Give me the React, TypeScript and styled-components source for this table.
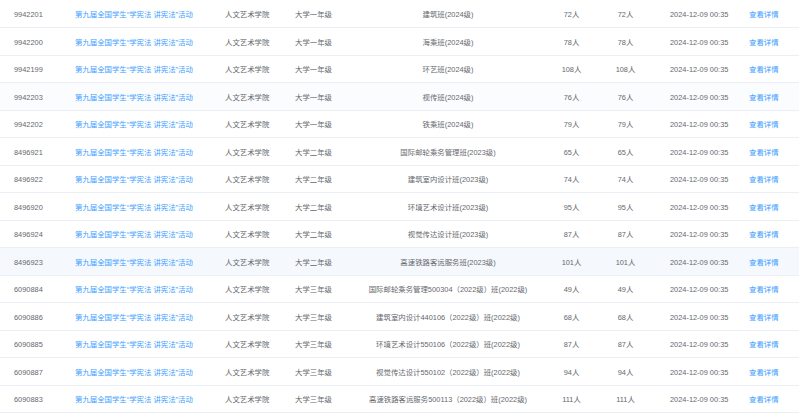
import React from "react";
import styled, { createGlobalStyle } from "styled-components";

const Global = createGlobalStyle`
  html, body { margin: 0; padding: 0; background: #ffffff; }
  body { font-family: "Liberation Sans", "Noto Sans CJK SC", sans-serif; }
`;

const Table = styled.div`
  width: 799px;
  display: flex;
  flex-direction: column;
  padding-top: 0.5px;
`;

const Row = styled.div<{ $bg?: string }>`
  display: grid;
  grid-template-columns: 61px 150px 70px 83px 168px 79px 29px 104px 55px;
  height: 27.5px;
  box-sizing: border-box;
  border-bottom: 1px solid #ebeef5;
  background: ${(p) => p.$bg || "#ffffff"};
  align-items: center;
  font-size: 7.4px;
  color: #66686d;
`;

const Cell = styled.div<{ $align?: "left" | "center"; $pl?: number }>`
  text-align: ${(p) => p.$align || "left"};
  padding-left: ${(p) => (p.$pl ?? 0)}px;
  white-space: nowrap;
  overflow: visible;
  line-height: 12px;
  padding-top: 3px;
`;

const LinkText = styled.span`
  color: #409eff;
`;

type R = { id: string; grade: string; cls: string; n: string; bg?: string };

const rows: R[] = [
  { id: "9942201", grade: "大学一年级", cls: "建筑班(2024级)", n: "72人" },
  { id: "9942200", grade: "大学一年级", cls: "海乘班(2024级)", n: "78人" },
  { id: "9942199", grade: "大学一年级", cls: "环艺班(2024级)", n: "108人" },
  { id: "9942203", grade: "大学一年级", cls: "视传班(2024级)", n: "76人", bg: "#fbfcfe" },
  { id: "9942202", grade: "大学一年级", cls: "铁乘班(2024级)", n: "79人" },
  { id: "8496921", grade: "大学二年级", cls: "国际邮轮乘务管理班(2023级)", n: "65人" },
  { id: "8496922", grade: "大学二年级", cls: "建筑室内设计班(2023级)", n: "74人" },
  { id: "8496920", grade: "大学二年级", cls: "环境艺术设计班(2023级)", n: "95人" },
  { id: "8496924", grade: "大学二年级", cls: "视觉传达设计班(2023级)", n: "87人" },
  { id: "8496923", grade: "大学二年级", cls: "高速铁路客运服务班(2023级)", n: "101人", bg: "#f5f9fe" },
  { id: "6090884", grade: "大学三年级", cls: "国际邮轮乘务管理500304（2022级）班(2022级)", n: "49人" },
  { id: "6090886", grade: "大学三年级", cls: "建筑室内设计440106（2022级）班(2022级)", n: "68人" },
  { id: "6090885", grade: "大学三年级", cls: "环境艺术设计550106（2022级）班(2022级)", n: "87人" },
  { id: "6090887", grade: "大学三年级", cls: "视觉传达设计550102（2022级）班(2022级)", n: "94人" },
  { id: "6090883", grade: "大学三年级", cls: "高速铁路客运服务500113（2022级）班(2022级)", n: "111人" },
];

export default function App() {
  return (
    <>
      <Global />
      <Table>
        {rows.map((r) => (
          <Row key={r.id} $bg={r.bg}>
            <Cell $pl={14}>{r.id}</Cell>
            <Cell $pl={14}>
              <LinkText>第九届全国学生“学宪法 讲宪法”活动</LinkText>
            </Cell>
            <Cell $pl={14}>人文艺术学院</Cell>
            <Cell $pl={14}>{r.grade}</Cell>
            <Cell $align="center">{r.cls}</Cell>
            <Cell $align="center">{r.n}</Cell>
            <Cell $align="center">{r.n}</Cell>
            <Cell $pl={30}>2024-12-09 00:35</Cell>
            <Cell $pl={5}>
              <LinkText>查看详情</LinkText>
            </Cell>
          </Row>
        ))}
      </Table>
    </>
  );
}
